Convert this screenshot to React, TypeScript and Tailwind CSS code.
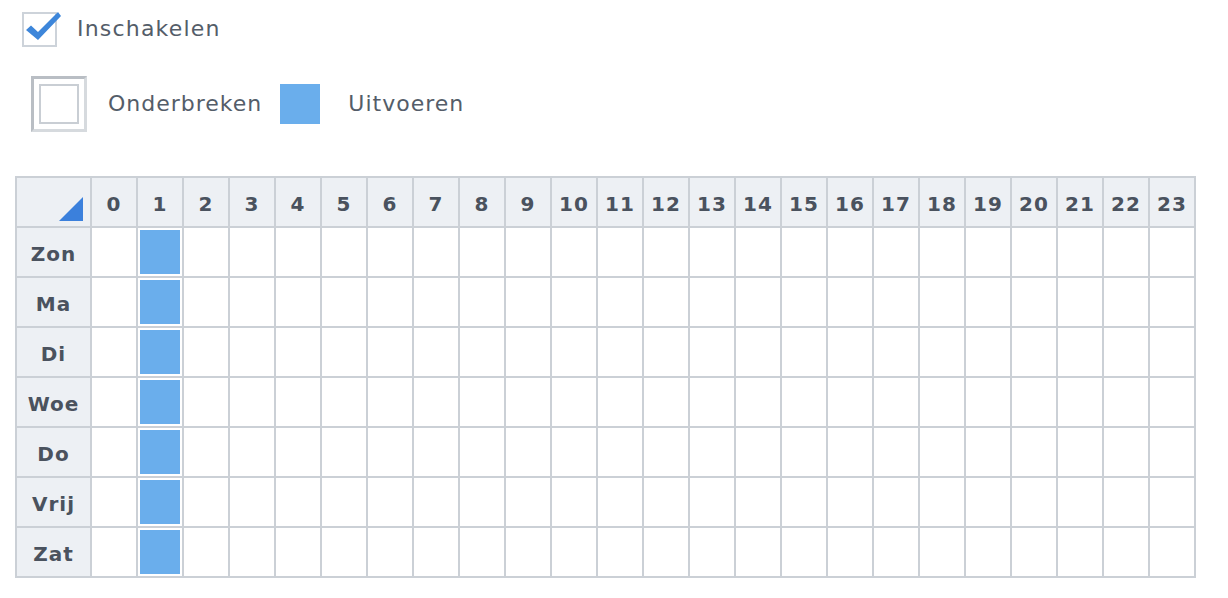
const HOURS = Array.from({ length: 24 }, (_, i) => i);
const DAYS = ["Zon", "Ma", "Di", "Woe", "Do", "Vrij", "Zat"];

function isActive(_day: number, hour: number): boolean {
  return hour === 1;
}

export default function App() {
  return (
    <div className="w-[1228px] h-[598px] bg-white font-['DejaVu_Sans',sans-serif] text-[#545d69] overflow-hidden">
      {/* Enable checkbox */}
      <div className="flex items-center pl-[22px] pt-[11px] h-[47px]">
        <div className="relative w-[35px] h-[35px] border-2 border-[#cdd3da] bg-white">
          <svg
            viewBox="0 0 40 40"
            className="absolute left-[-1px] top-[-6px] w-[40px] h-[40px]"
          >
            <path
              d="M3 22 L8 17.5 L15 24 L35 4 L38 8 L15 32 Z"
              fill="#3d86da"
            />
          </svg>
        </div>
        <span className="ml-[20px] text-[22px] tracking-[1.2px] leading-none">
          Inschakelen
        </span>
      </div>

      {/* Legend */}
      <div className="flex items-center pl-[31px] mt-[28px] h-[57px]">
        <div className="w-[56px] h-[56px] border-[3px] border-t-[#b9bec4] border-l-[#b9bec4] border-r-[#d6dade] border-b-[#d6dade] bg-white flex items-center justify-center">
          <div className="w-[40px] h-[40px] border-2 border-[#c9ced4]" />
        </div>
        <span className="ml-[21px] text-[22px] tracking-[1px] leading-none">
          Onderbreken
        </span>
        <div className="ml-[18px] w-[40px] h-[40px] bg-[#6aaeec]" />
        <span className="ml-[28px] text-[22px] tracking-[1px] leading-none">
          Uitvoeren
        </span>
      </div>

      {/* Schedule grid */}
      <div className="ml-[15px] mt-[44px] w-[1181px] bg-[#cbd0d6] p-[2px] grid grid-cols-[73px_repeat(24,44px)] auto-rows-[48px] gap-[2px]">
        <div className="bg-[#edf0f4] relative">
          <div className="absolute right-[7px] bottom-[5px] w-0 h-0 border-l-[24px] border-l-transparent border-b-[24px] border-b-[#3b80dc]" />
        </div>
        {HOURS.map((h) => (
          <div
            key={h}
            className="bg-[#edf0f4] flex items-center justify-center pt-[4px] text-[20px] font-bold tracking-[1px] text-[#4a525e]"
          >
            {h}
          </div>
        ))}
        {DAYS.map((d, di) => (
          <>
            <div
              key={d}
              className="bg-[#edf0f4] flex items-center justify-center pt-[4px] text-[20px] font-bold tracking-[1px] text-[#4a525e]"
            >
              {d}
            </div>
            {HOURS.map((h) => (
              <div key={`${d}-${h}`} className="bg-white p-[2px]">
                {isActive(di, h) && <div className="w-full h-full bg-[#6aaeec]" />}
              </div>
            ))}
          </>
        ))}
      </div>
    </div>
  );
}
